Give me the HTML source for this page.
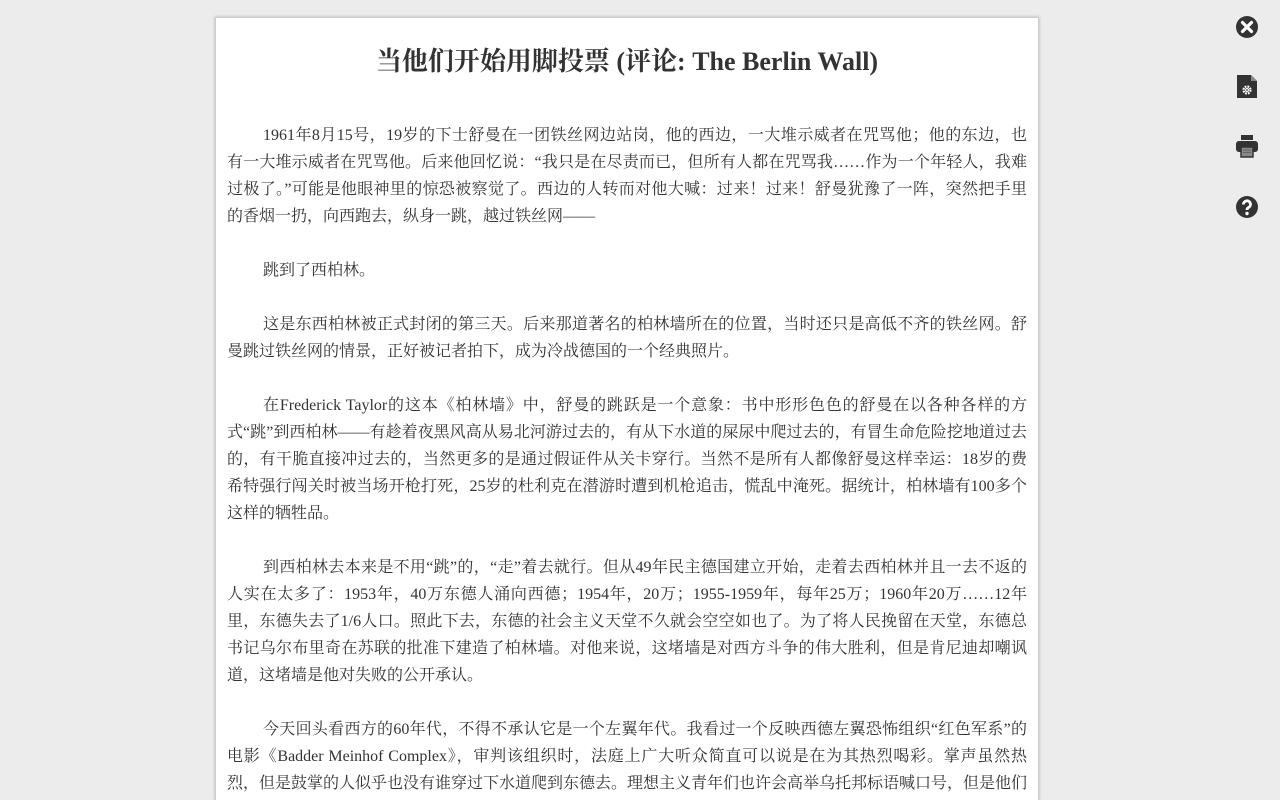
<!DOCTYPE html>
<html><head><meta charset="utf-8"><style>
html,body{margin:0;padding:0;width:1280px;height:800px;overflow:hidden}
body{background:#ececec;font-family:"Liberation Serif","Noto Serif CJK SC","Noto Sans CJK SC",serif;color:#333;position:relative}
.page{position:absolute;left:215px;top:17px;width:824px;height:783px;overflow:hidden;background:#fff;border:1px solid #ccc;border-bottom:none;box-shadow:0 0 3px rgba(0,0,0,.25);box-sizing:border-box}
h1{margin:0;position:absolute;top:27px;left:0;right:0;text-align:center;font-size:26px;font-weight:bold;line-height:34px;color:#333}
.body{position:absolute;top:104px;left:11px;width:800px;font-size:16px;line-height:27px}
.p{margin:0 0 27px}
.p div{height:27px;overflow:hidden;text-align:justify;text-align-last:justify;text-justify:inter-character}
.p div.l{text-align-last:left}
.p div.i{padding-left:36px}
.ic{position:absolute;left:1235px;width:24px;height:24px}
</style></head><body>
<div class="page">
<h1>当他们开始用脚投票 (评论: The Berlin Wall)</h1>
<div class="body">
<div class="p"><div class="i">1961年8月15号，19岁的下士舒曼在一团铁丝网边站岗，他的西边，一大堆示威者在咒骂他；他的东边，也</div><div>有一大堆示威者在咒骂他。后来他回忆说：“我只是在尽责而已，但所有人都在咒骂我……作为一个年轻人，我难</div><div>过极了。”可能是他眼神里的惊恐被察觉了。西边的人转而对他大喊：过来！过来！舒曼犹豫了一阵，突然把手里</div><div class="l">的香烟一扔，向西跑去，纵身一跳，越过铁丝网——</div></div>
<div class="p"><div class="i l">跳到了西柏林。</div></div>
<div class="p"><div class="i">这是东西柏林被正式封闭的第三天。后来那道著名的柏林墙所在的位置，当时还只是高低不齐的铁丝网。舒</div><div class="l">曼跳过铁丝网的情景，正好被记者拍下，成为冷战德国的一个经典照片。</div></div>
<div class="p"><div class="i">在Frederick Taylor的这本《柏林墙》中，舒曼的跳跃是一个意象：书中形形色色的舒曼在以各种各样的方</div><div>式“跳”到西柏林——有趁着夜黑风高从易北河游过去的，有从下水道的屎尿中爬过去的，有冒生命危险挖地道过去</div><div>的，有干脆直接冲过去的，当然更多的是通过假证件从关卡穿行。当然不是所有人都像舒曼这样幸运：18岁的费</div><div>希特强行闯关时被当场开枪打死，25岁的杜利克在潜游时遭到机枪追击，慌乱中淹死。据统计，柏林墙有100多个</div><div class="l">这样的牺牲品。</div></div>
<div class="p"><div class="i">到西柏林去本来是不用“跳”的，“走”着去就行。但从49年民主德国建立开始，走着去西柏林并且一去不返的</div><div>人实在太多了：1953年，40万东德人涌向西德；1954年，20万；1955-1959年，每年25万；1960年20万……12年</div><div>里，东德失去了1/6人口。照此下去，东德的社会主义天堂不久就会空空如也了。为了将人民挽留在天堂，东德总</div><div>书记乌尔布里奇在苏联的批准下建造了柏林墙。对他来说，这堵墙是对西方斗争的伟大胜利，但是肯尼迪却嘲讽</div><div class="l">道，这堵墙是他对失败的公开承认。</div></div>
<div class="p"><div class="i">今天回头看西方的60年代，不得不承认它是一个左翼年代。我看过一个反映西德左翼恐怖组织“红色军系”的</div><div>电影《Badder Meinhof Complex》，审判该组织时，法庭上广大听众简直可以说是在为其热烈喝彩。掌声虽然热</div><div>烈，但是鼓掌的人似乎也没有谁穿过下水道爬到东德去。理想主义青年们也许会高举乌托邦标语喊口号，但是他们</div></div>
</div>
</div>
<svg class="ic" style="top:15px" viewBox="0 0 24 24"><circle cx="12" cy="12" r="11" fill="#333"/><path d="M7.5 7.5l9 9M16.5 7.5l-9 9" stroke="#fff" stroke-width="3.2" stroke-linecap="round"/></svg>
<svg class="ic" style="top:74px" viewBox="0 0 24 24"><path d="M2 1h14l6 6v17H2z" fill="#333"/><path d="M16 1v6h6" fill="#888"/><circle cx="12" cy="16" r="3.5" fill="none" stroke="#fff" stroke-width="2.2" stroke-dasharray="1.8 1"/><circle cx="12" cy="16" r="2" fill="#fff"/><circle cx="12" cy="16" r="0.9" fill="#333"/></svg>
<svg class="ic" style="top:134px" viewBox="0 0 24 24"><rect x="6" y="1" width="12" height="5" fill="#333"/><rect x="1" y="7" width="22" height="11" rx="3" fill="#333"/><rect x="6" y="13" width="12" height="10" fill="#888" stroke="#333" stroke-width="1.5"/><path d="M8 16h8M8 18.5h8" stroke="#666" stroke-width="1"/></svg>
<svg class="ic" style="top:195px" viewBox="0 0 24 24"><circle cx="12" cy="12" r="11" fill="#333"/><path d="M8.5 9.5a3.5 3.5 0 1 1 5 3c-1.2.6-1.5 1.2-1.5 2.5" fill="none" stroke="#fff" stroke-width="2.8"/><circle cx="12" cy="18.5" r="1.7" fill="#fff"/></svg>
</body></html>
